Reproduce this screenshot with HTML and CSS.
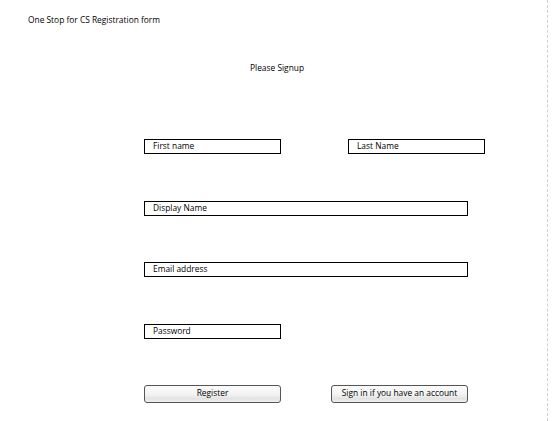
FILE: index.html
```html
<!DOCTYPE html>
<html>
<head>
<meta charset="utf-8">
<link rel="stylesheet" href="styles.css">
</head>
<body>
<div class="page">
  <div class="title">One Stop for CS Registration form</div>
  <div class="subtitle">Please Signup</div>
  <div class="form">
    <div class="row">
      <div class="field short">First name</div>
      <div class="field short last">Last Name</div>
    </div>
    <div class="row">
      <div class="field wide">Display Name</div>
    </div>
    <div class="row">
      <div class="field wide">Email address</div>
    </div>
    <div class="row">
      <div class="field short">Password</div>
    </div>
    <div class="row buttons">
      <div class="btn">Register</div>
      <div class="btn">Sign in if you have an account</div>
    </div>
  </div>
</div>
</body>
</html>
```
FILE: styles.css
```css
html, body {
  margin: 0;
  padding: 0;
  background: #fff;
}
body {
  font-family: "Open Sans", "Noto Sans", sans-serif;
  font-size: 8.4px;
  color: #000;
}
.page {
  width: 548px;
  height: 421px;
  border-right: 1px dashed #d0d0d0;
  box-sizing: border-box;
  position: relative;
}
.title {
  padding: 13px 0 0 28px;
  line-height: 14px;
}
.subtitle {
  margin-top: 34px;
  padding-left: 250px;
  line-height: 14px;
}
.form {
  margin-top: 64px;
  padding-left: 144px;
  display: flex;
  flex-direction: column;
  gap: 46.5px;
}
.row {
  display: flex;
  gap: 67px;
}
.field {
  box-sizing: border-box;
  height: 15px;
  border: 1px solid #000;
  padding-left: 8px;
  line-height: 12px;
}
.short { width: 137px; }
.wide { width: 324px; }
.row.buttons {
  gap: 50px;
}
.btn {
  box-sizing: border-box;
  width: 137px;
  height: 18px;
  border: 1px solid #555;
  border-radius: 3px;
  background: linear-gradient(#fbfbfb 0%, #f2f2f2 55%, #e2e2e2 80%, #f0f0f0 100%);
  text-align: center;
  line-height: 14px;
}
```
